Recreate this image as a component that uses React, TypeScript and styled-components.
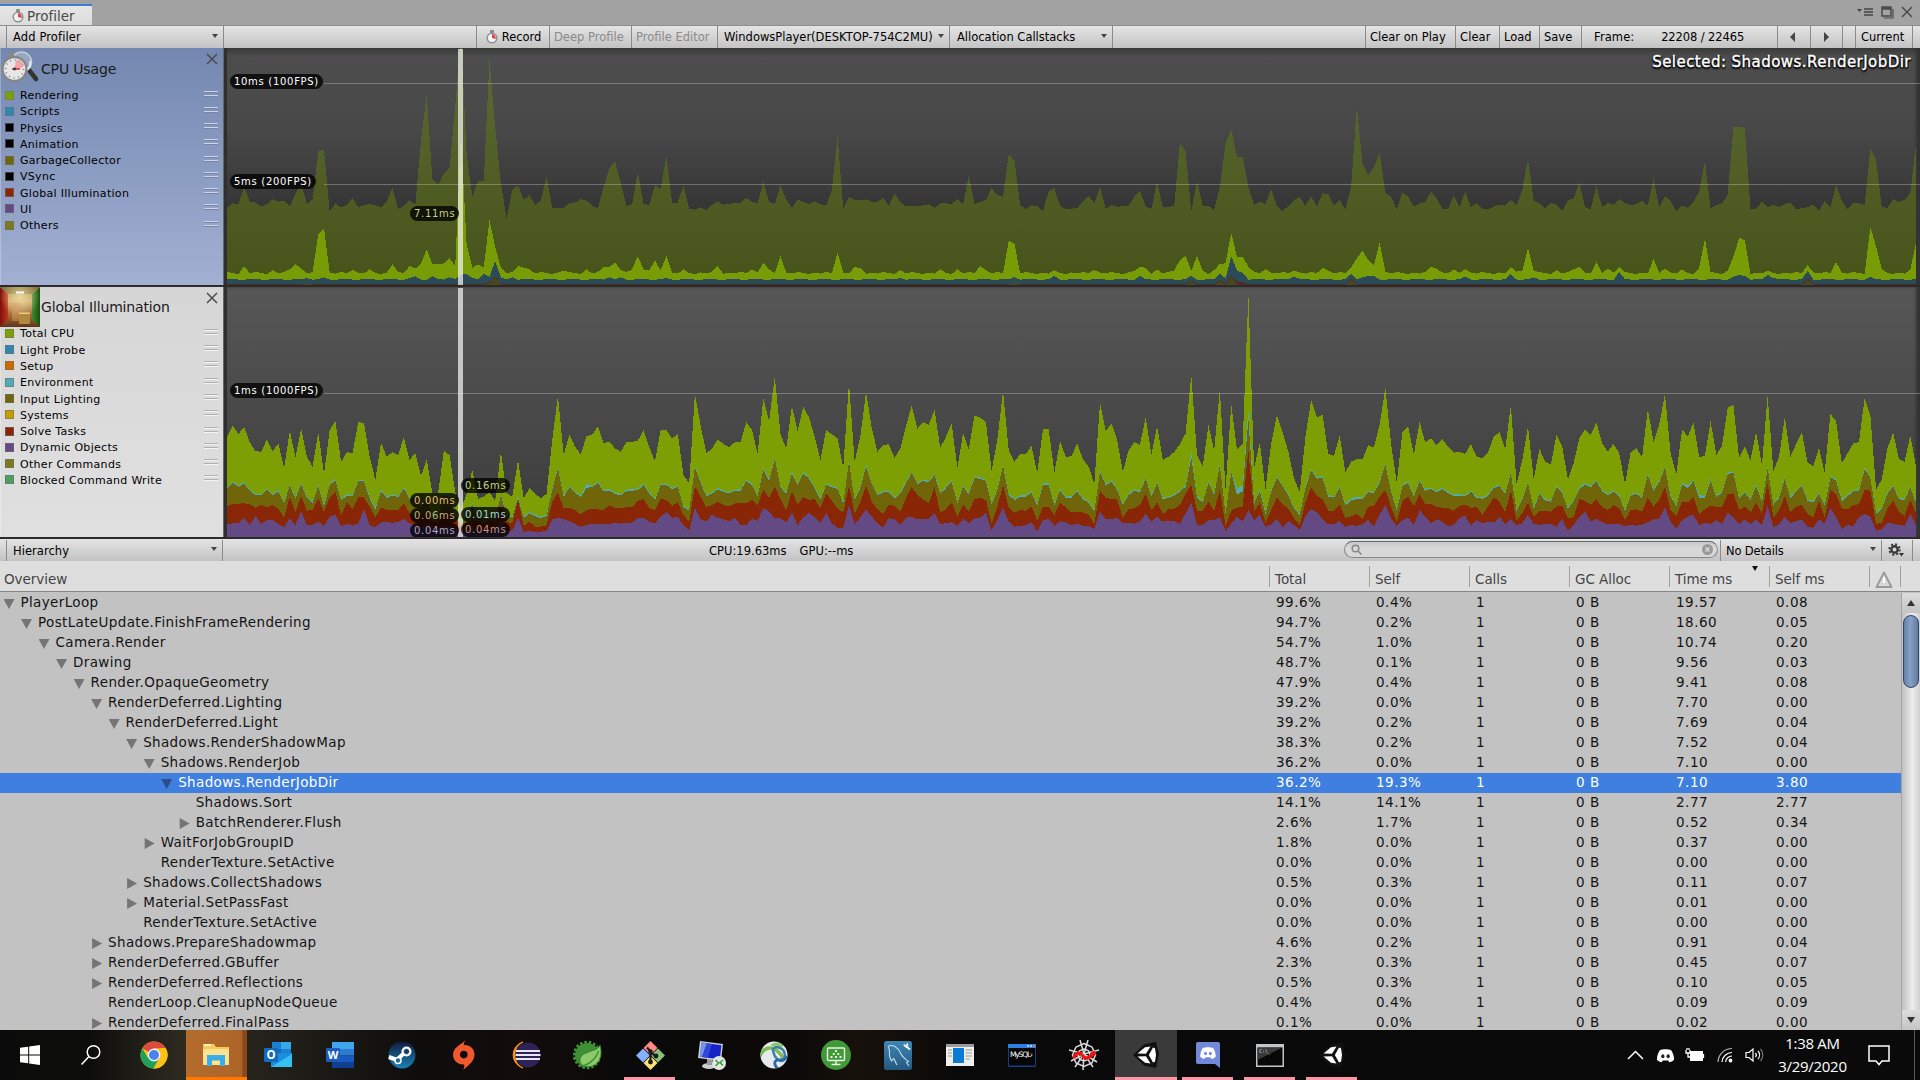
import React from "react";
import styled, { createGlobalStyle, css } from "styled-components";

const UI = `"DejaVu Sans", Verdana, sans-serif`;

const Global = createGlobalStyle`
  * { box-sizing: border-box; }
  html, body { margin: 0; padding: 0; overflow: hidden; background: #000; }
  body { font-family: ${UI}; color: #111; }
  svg { display: block; flex: none; }
`;

/* ---------- chart data (one value per frame, screen-down units) ---------- */

const parse = (s: string) => s.trim().split(/[\s,]+/).map(Number);

const cpuHistory = parse(`
623 610 612 562 605 608 620 612 598 605 602 620 580 550 612 598 453 450 635 610 622 615 594 622 615 612 616 622 605 563
627 618 600 615 420 285 538 553 520 505 320 100 465 590 543 543 180 380 550 655 570 556 600 585 615 602 530 623 623 623
610 607 598 602 617 625 560 505 483 550 618 612 516 612 615 555 568 467 608 608 557 627 629 622 630 615 604 614 612 609
608 594 605 610 545 605 612 555 598 624 599 605 612 604 612 617 570 408 625 590 600 600 598 605 605 594 618 580 606 618
617 620 616 613 624 610 610 612 597 614 528 612 606 600 564 585 590 462 483 615 627 616 618 633 575 564 618 627 626 624
605 587 610 560 627 615 620 619 618 590 571 620 627 545 622 621 618 428 455 633 543 617 618 630 560 430 386 470 472 560
615 605 612 566 618 633 618 600 591 618 588 620 580 582 618 600 628 560 322 490 525 502 458 580 590 628 578 590 620 610
606 575 595 627 627 585 622 575 622 609 627 629 620 614 617 600 615 570 477 602 610 624 609 614 633 602 594 548 622 628
558 623 608 614 597 609 615 612 602 617 537 622 588 604 633 617 623 605 575 483 625 615 610 585 382 381 383 627 626 605
621 615 621 612 608 628 624 622 613 633 602 622 555 602 627 610 610 615 447 480 620 624 597 606 600 580 430
`);

const renderingPeaks: Record<number, number> = {
  3: 798, 8: 810, 11: 808, 12: 793, 13: 805, 16: 702, 17: 686, 22: 810, 25: 808, 29: 793, 32: 798, 33: 806, 34: 790, 35: 747, 36: 793,
  37: 793, 38: 790, 39: 775, 40: 798, 41: 400, 42: 735, 43: 803, 44: 793, 45: 802, 46: 660, 47: 740, 48: 803, 51: 798,
  52: 803, 53: 808, 59: 812, 63: 808, 66: 802, 67: 802, 68: 787, 69: 810, 71: 808, 72: 768, 73: 808, 74: 812, 75: 780, 76: 812,
  77: 768, 80: 808, 86: 798, 92: 808, 94: 789, 95: 808, 97: 768, 107: 758, 110: 801, 111: 805, 118: 810, 125: 808, 128: 808,
  132: 798, 133: 810, 137: 723, 138: 730, 145: 810, 152: 810, 159: 812, 160: 801, 161: 803, 163: 808, 166: 812, 167: 780,
  168: 768, 169: 812, 170: 768, 171: 812, 173: 810, 174: 792, 175: 790, 176: 698, 177: 770, 178: 770, 179: 800, 182: 808,
  187: 812, 192: 804, 193: 812, 197: 803, 198: 775, 199: 752, 200: 780, 201: 795, 202: 727, 203: 815, 211: 801, 212: 806,
  215: 808, 217: 808, 225: 801, 226: 815, 227: 812, 228: 745, 229: 812, 233: 811, 236: 808, 237: 801, 240: 787, 242: 806,
  244: 801, 250: 776, 252: 806, 255: 808, 258: 805, 259: 716, 263: 812, 264: 770, 265: 714, 266: 720, 270: 812, 277: 795,
  282: 786, 288: 681, 289: 740, 290: 808, 295: 810, 296: 728,
};
const scriptPeaks: Record<number, number> = {
  14: 834, 17: 832, 32: 834, 33: 829, 36: 829, 39: 832, 41: 824, 42: 822, 43: 834, 45: 822, 46: 830, 47: 784, 48: 832, 50: 832, 67: 832, 69: 832, 77: 834, 118: 834,
  138: 831, 145: 828, 160: 828, 169: 828, 174: 820, 175: 835, 176: 768, 177: 812, 178: 818, 187: 830, 197: 822, 199: 832, 200: 828,
  201: 828, 217: 830, 225: 822, 229: 832, 244: 816, 264: 830, 265: 825, 266: 828, 270: 825, 271: 834, 277: 813, 288: 830,
};
const giPeaks: Record<number, number> = { 46: 845, 47: 828, 169: 842, 174: 840, 176: 826, 177: 845, 178: 846, 197: 834, 277: 836 };

const FRAMES = 297;
const fill = (peaks: Record<number, number>, base: (i: number) => number) =>
  Array.from({ length: FRAMES }, (_, i) => peaks[i] ?? base(i));

const cpuRendering = fill(renderingPeaks, (i) => 819 + (((i * 7) % 5) - 2) * 1.6);
const cpuScripts = fill(scriptPeaks, (i) => 837 + ((i * 5) % 4) * 0.8);
const cpuGI = fill(giPeaks, () => 851.5);
const cpuGC = fill({ 14: 849, 46: 849, 47: 831, 138: 847, 169: 844, 174: 843, 176: 830, 197: 837, 277: 839 }, () => 855);

const giTotal = parse(`
472 436 462 441 487 514 515 478 514 490 564 453 532 446 530 560 456 582 450 423 546 516 520 426 429 530 600 488 530 516
525 471 540 519 588 537 640 640 513 525 636 690 640 570 656 650 636 662 514 640 650 540 655 625 642 654 642 480 348 525
465 500 524 468 464 438 490 484 506 515 487 486 482 450 502 543 450 450 476 462 585 610 342 435 520 505 478 492 502 487
486 426 450 520 354 424 290 462 505 378 453 380 412 470 540 450 463 475 564 306 545 468 336 445 515 495 493 534 505 438
376 446 426 434 390 504 470 430 564 459 508 407 413 426 572 480 333 512 545 522 522 498 578 448 448 578 483 531 528 490
538 560 612 368 453 430 480 575 512 486 495 411 523 438 540 530 516 492 460 285 525 560 435 512 327 628 372 508 490 42
565 487 628 490 405 457 515 595 636 470 360 412 405 522 528 467 577 545 538 538 495 503 435 323 490 608 457 438 523 426
487 475 496 477 500 518 516 522 492 530 535 517 470 456 508 375 612 540 438 598 507 545 553 466 500 598 550 475 448 465
427 490 515 492 520 612 517 505 531 387 485 435 342 520 583 448 470 427 531 528 423 525 498 383 375 535 498 540 456 556
345 573 530 411 530 492 456 548 558 504 578 402 423 550 520 490 486 354 405 628 598 505 458 537 545 466 560
`);

const giSolve = parse(`
680 671 671 670 673 683 674 682 675 687 713 650 695 647 692 690 655 695 652 636 705 668 686 652 652 680 712 682 690 691
690 670 700 710 705 690 725 725 690 695 720 738 735 720 725 730 720 728 680 725 730 660 738 725 740 740 736 665 638 685
684 690 704 690 687 688 690 675 685 685 682 682 663 657 685 690 657 660 678 667 705 725 620 650 682 675 665 675 680 670
668 670 660 675 628 655 618 658 690 636 672 652 660 657 685 640 662 685 698 618 700 668 617 665 688 702 673 678 695 655
621 645 658 670 622 697 688 667 710 673 695 657 654 660 730 680 615 683 698 690 692 680 722 680 680 705 667 683 697 697
697 704 732 632 654 657 658 714 688 685 675 641 692 667 702 688 686 675 640 616 692 692 665 693 630 738 692 683 680 513
695 668 728 690 652 673 685 715 735 668 621 647 658 692 693 673 714 708 702 717 680 678 650 630 680 725 663 650 678 643
672 672 680 683 685 692 678 673 684 680 705 680 652 665 697 633 720 700 668 710 693 693 695 680 677 714 712 657 663 675
658 682 690 675 685 720 690 688 695 653 680 660 620 690 708 665 667 650 702 688 677 680 682 642 640 690 680 697 667 700
610 712 692 648 697 680 675 702 712 662 712 630 642 685 688 675 673 630 632 732 728 685 662 695 708 658 700
`);

const giDynamic = parse(`
733 730 730 714 735 708 732 720 720 732 742 715 735 693 735 735 725 738 710 703 740 730 737 730 687 735 742 727 726 729
725 717 730 735 740 740 750 745 740 740 745 755 755 740 750 750 750 750 720 750 752 713 756 752 756 755 752 718 714 717
724 732 740 735 731 731 732 733 728 731 728 728 713 713 725 730 710 697 714 710 735 752 683 717 725 703 714 717 725 714
735 735 715 723 684 693 716 714 728 697 735 712 699 712 730 698 730 743 744 675 732 712 689 710 730 743 714 718 735 713
711 718 717 717 698 732 730 726 738 716 730 716 713 698 750 720 682 725 740 738 735 726 755 720 717 737 724 727 735 731
737 738 747 695 717 717 714 730 729 731 724 701 725 711 725 723 723 732 700 668 735 735 720 720 712 753 730 710 724 690
720 705 740 733 717 743 722 735 750 708 687 697 717 733 733 722 740 735 738 732 720 740 705 675 715 738 720 713 735 691
710 730 718 725 738 735 714 707 738 720 730 725 727 710 732 717 735 730 704 732 735 731 731 740 716 753 735 710 695 725
716 727 733 731 731 740 734 737 734 727 718 717 682 725 746 720 710 704 736 728 732 720 732 698 712 732 718 732 718 735
678 742 733 710 730 723 719 740 743 718 730 683 712 747 735 738 712 702 710 752 748 728 731 735 737 702 735
`);

const GI_BASE = 771;
const giInput = giTotal.map((v, i) => Math.min(GI_BASE - (GI_BASE - v) * 0.487, giSolve[i] - 6));
const giEnvExtra: Record<number, number> = { 63: 12, 169: 16, 177: 16, 178: 20, 179: 28, 198: 8, 256: 8, 258: 10 };
const giEnv = giInput.map((v, i) => v - (giEnvExtra[i] ?? 4));

const area = (values: number[], base: number) =>
  `M0 ${base}` + values.map((v, i) => `L${i} ${v.toFixed(1)}`).join("") + `L${values.length - 1} ${base}Z`;

/* ---------- window frame ---------- */

const Screen = styled.div`
  width: 1920px; height: 1080px; display: flex; flex-direction: column; overflow: hidden; background: #c2c2c2;
`;
const TitleBar = styled.div`
  height: 26px; flex: none; background: #a2a2a2; display: flex; justify-content: space-between; align-items: flex-end;
  border-bottom: 1px solid #8f8f8f;
`;
const Tab = styled.div`
  width: 92px; height: 21px; border-top: 2px solid #3d7dd0; background: linear-gradient(#e6e6e6, #dcdcdc);
  display: flex; align-items: center; padding-left: 12px; gap: 3px; font-size: 13.5px; letter-spacing: 0.02px; color: #4a4a4a;
`;
const WindowButtons = styled.div`
  display: flex; align-items: center; gap: 7px; height: 26px; padding-right: 7px;
`;

const Bar = styled.div<{ $h: number; $drop?: number }>`
  height: ${(p) => p.$h}px; flex: none; display: flex; background: linear-gradient(#e4e4e4, #c3c3c3);
  font-size: 11.5px; color: #000; padding-top: ${(p) => p.$drop ?? 0}px;
`;
const Cell = styled.div<{ $w?: number; $pad?: number; $muted?: boolean; $ls?: number; $line?: boolean; $center?: boolean }>`
  ${(p) => (p.$w ? css`width: ${p.$w}px; flex: none;` : css`flex: 1;`)}
  height: 100%; display: flex; align-items: center; padding: 0 0 0 ${(p) => p.$pad ?? 0}px;
  border-right: ${(p) => (p.$line === false ? "0" : "1px solid #8b8b8b")};
  color: ${(p) => (p.$muted ? "#8a8a8a" : "#000")};
  letter-spacing: ${(p) => p.$ls ?? 0}px; white-space: pre;
  ${(p) => p.$center && css`justify-content: center; padding: 0;`}
`;
const Grow = styled.span`flex: 1;`;
const Caret = styled.i`
  width: 0; height: 0; border: 3px solid transparent; border-top: 4px solid #444; border-bottom: 0; margin: -3px 5px 0 0;
`;
const Step = styled.i<{ $left?: boolean }>`
  width: 0; height: 0; border: 5px solid transparent; border-right-width: 0; border-left: 5px solid #444;
  margin-right: ${(p) => (p.$left ? 4 : 1)}px;
  transform: ${(p) => (p.$left ? "scaleX(-1)" : "none")};
`;
const FrameCount = styled.span`letter-spacing: -0.1px; padding-right: 6px;`;
const GpuTime = styled.span`margin-left: 13px;`;

/* ---------- module panels ---------- */

const Module = styled.div<{ $h: number }>`
  height: ${(p) => p.$h}px; flex: none; display: flex; border-bottom: 2px solid #2b2b2b; background: #333;
`;
const Side = styled.div<{ $selected?: boolean }>`
  width: 224px; flex: none; border-right: 1px solid #666;
  background: ${(p) => (p.$selected ? "linear-gradient(#7387b0, #a2b0d2)" : "linear-gradient(#d6d6d6, #e0e0e0)")};
  box-shadow: inset 1px 0 rgba(255,255,255,.25);
`;
const SideHead = styled.div`
  height: 40px; display: flex; align-items: center; font-size: 14px; letter-spacing: -0.16px; color: #1b1b1b;
`;
const SideTitle = styled.span<{ $drop?: boolean }>`padding: ${(p) => (p.$drop ? 2 : 0)}px 0 0 1px; flex: 1;`;
const CloseMark = styled.svg`align-self: flex-start; margin: 5px 5px 0 0;`;
const Legend = styled.div<{ $top: number }>`
  margin-top: ${(p) => p.$top}px; display: flex; flex-direction: column;
`;
const LegendRow = styled.div`
  height: 16.27px; display: flex; align-items: center; font-size: 11px; letter-spacing: 0.3px; padding: 0 5px; color: #000;
`;
const Swatch = styled.i<{ $c: string }>`
  width: 9px; height: 9px; background: ${(p) => p.$c}; border: 1px solid rgba(110,110,110,.6); margin-right: 6px; margin-top: -1px;
`;
const Handle = styled.i<{ $selected?: boolean }>`
  width: 14px; height: 7px; margin: -3px 0 0 auto;
  background: ${(p) =>
    p.$selected
      ? "linear-gradient(#ccd4e6 0 1px, #7685a6 1px 2px, transparent 2px 4px, #ccd4e6 4px 5px, #7685a6 5px 6px, transparent 6px)"
      : "linear-gradient(#b0b0b0 0 1px, #f4f4f4 1px 2px, transparent 2px 4px, #b0b0b0 4px 5px, #f4f4f4 5px 6px, transparent 6px)"};
`;
const Plot = styled.div<{ $gi?: boolean }>`
  flex: 1; position: relative; padding: 0 4px 0 3px; overflow: hidden;
  background: ${(p) => (p.$gi ? "linear-gradient(#575757, #3b3b3b)" : "linear-gradient(#3a3d3a, #4d4d4d 4%, #484848 35%, #343434 70%, #2e2e2e)")};
  box-shadow: inset 3px 0 #2f2f2f, inset -4px 0 3px #333;
`;
const GridLine = styled.i<{ $y: number; $x: number }>`
  position: absolute; left: ${(p) => p.$x}px; right: 0; top: ${(p) => p.$y}px; height: 1px; background: rgba(255,255,255,.27);
`;
const Cursor = styled.i`
  position: absolute; left: 234px; width: 5px; top: 1px; bottom: 0; background: rgba(240,240,236,.74);
`;
const Pill = styled.span<{ $x: number; $y: number; $w: number; $c?: string }>`
  position: absolute; left: ${(p) => p.$x}px; top: ${(p) => p.$y}px; width: ${(p) => p.$w}px; height: 15px; border-radius: 8px;
  background: rgba(0,0,0,.78); color: ${(p) => p.$c ?? "#fff"}; font-size: 10px; line-height: 15px; letter-spacing: 0.7px;
  padding-left: 4px; white-space: nowrap;
`;
const Selected = styled.div`
  position: absolute; right: 9px; top: 5px; font-size: 15px; line-height: 18px; color: #fff; letter-spacing: 0.46px;
  text-shadow: 0 1px 1px #000, 0 2px 2px #000, 1px 1px 1px #000, -1px 1px 1px #000;
  -webkit-text-stroke: 0.4px #fff;
`;

/* ---------- hierarchy table ---------- */

const Search = styled.div`
  width: 374px; height: 17px; margin: 1px 2px 0 0; border: 1px solid #888; border-top-color: #666; border-radius: 9px;
  background: linear-gradient(#c9c9c9, #d8d8d8 40%); display: flex; align-items: center; justify-content: space-between; padding: 0 4px 0 6px;
`;
const HeaderRow = styled.div`
  height: 31px; flex: none; display: flex; background: #dedede; border-bottom: 1px solid #858585; color: #444;
  font-size: 13.5px; letter-spacing: -0.05px; padding-top: 5px;
`;
const HeadCell = styled.div<{ $w?: number }>`
  ${(p) => (p.$w ? css`width: ${p.$w}px;` : css`width: 1269px; border: 0;`)}
  flex: none; height: 21px; line-height: 27px; padding-left: ${(p) => (p.$w ? 5 : 4)}px; position: relative; white-space: nowrap;
  ${(p) => p.$w && css`border-left: 1px solid #a0a0a0;`}
`;
const SortMark = styled.i`
  position: absolute; right: 11px; top: 0; border: 3px solid transparent; border-top: 5px solid #111; border-bottom: 0;
`;
const Warning = styled.svg`margin-top: 5px;`;
const TableBody = styled.div`flex: 1; min-height: 0; display: flex; overflow: hidden; padding-top: 1px;`;
const Rows = styled.div`width: 1901px; flex: none;`;
const Row = styled.div<{ $on?: boolean }>`
  height: 20px; display: flex; font-size: 13.5px; line-height: 18px; white-space: nowrap;
  background: ${(p) => (p.$on ? "#3e7fdf" : "transparent")}; color: ${(p) => (p.$on ? "#fff" : "#141414")};
`;
const NameCell = styled.div<{ $depth: number }>`
  width: 1270px; flex: none; display: flex; align-items: flex-start; letter-spacing: 0.36px;
  padding-left: ${(p) => 3.5 + p.$depth * 17.52}px;
`;
const Arrow = styled.i<{ $open?: boolean; $none?: boolean; $on?: boolean }>`
  width: 12px; height: 12px; margin: 5px 5px 0 0; flex: none;
  background: ${(p) => (p.$none ? "transparent" : p.$on ? "#2c4f8c" : "#757575")};
  clip-path: ${(p) => (p.$open ? "polygon(0 1px, 11px 1px, 5.5px 11px)" : "polygon(1px 0, 11px 5.5px, 1px 11px)")};
`;
const Value = styled.div`width: 100px; flex: none; padding-left: 6px; letter-spacing: 0.5px;`;
const Scroll = styled.div`
  width: 19px; flex: none; border-left: 1px solid #a5a5a5; display: flex; flex-direction: column; align-items: center;
  background: linear-gradient(90deg, #c0c0c0, #eee 60%, #cfcfcf);
`;
const ScrollButton = styled.div<{ $down?: boolean }>`
  width: 100%; height: 20px; flex: none; display: flex; align-items: center; justify-content: center; background: linear-gradient(#dcdcdc, #c4c4c4);
  &::after { content: ""; border: 4px solid transparent; border-bottom: 6px solid #333; border-top: 0; transform: ${(p) => (p.$down ? "rotate(180deg)" : "none")}; }
`;
const Thumb = styled.div`
  width: 16px; height: 73px; margin-top: 2px; border-radius: 8px; border: 1.5px solid #33466b; background: linear-gradient(90deg, #6580a8, #88a0c4 45%, #5f7ba5);
`;

/* ---------- taskbar ---------- */

const TaskBar = styled.div`
  height: 50px; flex: none; display: flex; color: #fff; font-family: "Open Sans", "Noto Sans", sans-serif;
  background: linear-gradient(90deg, #0b0b0b 0, #0d0d0b 90px, #2d2a20 180px, #24221b 260px, #0e0d0c 420px, #120c0b 520px, #090909 640px, #0c0a08 800px, #17110b 860px, #0a0909 960px, #0a0a0a);
`;
const Task = styled.div<{ $w?: number; $active?: boolean; $orange?: boolean; $line?: boolean }>`
  width: ${(p) => p.$w ?? 62}px; flex: none; display: flex; align-items: center; justify-content: center; position: relative;
  ${(p) => p.$active && css`background: #3a3a3a;`}
  ${(p) => p.$orange && css`background: linear-gradient(90deg, #b46c2d, #ac6428 92%, #874a18 93%); padding-right: 2px;`}
  &::after {
    content: ""; position: absolute; bottom: 0; height: 3px;
    left: ${(p) => (p.$active || p.$orange ? 0 : 5)}px; right: ${(p) => (p.$active || p.$orange ? 0 : 6)}px;
    background: ${(p) => (p.$orange ? "#ff7800" : p.$line || p.$active ? "#fb96a4" : "transparent")};
  }
`;
const Tray = styled.div`margin-left: auto; display: flex; align-items: center;`;
const TrayItem = styled.div<{ $w: number }>`width: ${(p) => p.$w}px; display: flex; justify-content: center;`;
const Clock = styled.div`
  width: 85px; text-align: center; font-size: 15px; line-height: 23px; letter-spacing: -0.3px;
`;
const Notice = styled.div`width: 48px; display: flex; justify-content: center; margin-right: 11px;`;
const Peek = styled.div`width: 6px; height: 50px; border-left: 1px solid #555;`;

/* ---------- icons ---------- */

const Stopwatch = () => (
  <svg width="12" height="14" viewBox="0 0 12 14">
    <rect x="4" y="0" width="4" height="3" rx="1" fill="#8a8a8a" />
    <circle cx="6" cy="8" r="4.800" fill="#f2f2f2" stroke="#909090" strokeWidth="1.5" />
    <path d="M6 8V4A4 4 0 0 1 9.6 9Z" fill="#e0414d" />
  </svg>
);

const CpuIcon = () => (
  <svg width="40" height="34" viewBox="0 0 40 34">
    <path d="M29 19L36 28" stroke="#333" strokeWidth="4.5" strokeLinecap="round" />
    <circle cx="21.5" cy="11" r="10" fill="#b8c4dc" fillOpacity=".5" stroke="#c5ccd8" strokeWidth="1.5" />
    <rect x="9" y="1" width="5" height="6" fill="#888" />
    <circle cx="14.5" cy="18" r="12" fill="#e6e6e6" stroke="#868686" strokeWidth="2.4" />
    <circle cx="14.5" cy="18" r="9" fill="none" stroke="#777" strokeWidth="1.6" strokeDasharray="1 3.7" />
    <path d="M14.5 18L16 9A9 9 0 0 1 24 14L22 17Z" fill="#ee9a9c" opacity=".85" />
    <path d="M30 10A8 8 0 0 1 27.500 18" stroke="#dfe4ee" strokeWidth="2" fill="none" />
    <path d="M12 18H20" stroke="#c22" strokeWidth="1.4" />
    <circle cx="14.5" cy="18" r="1.4" fill="#333" />
  </svg>
);

const CornellIcon = () => (
  <svg width="40" height="40" viewBox="0 0 40 40">
    <defs>
      <linearGradient id="room" x1="0" y1="0" x2="0" y2="1">
        <stop offset="0" stopColor="#9a8448" /><stop offset=".35" stopColor="#c9a765" /><stop offset=".75" stopColor="#9a6230" /><stop offset="1" stopColor="#5f3417" />
      </linearGradient>
      <radialGradient id="glow" cx=".5" cy=".25" r=".5"><stop offset="0" stopColor="#fff0b8" stopOpacity=".7" /><stop offset="1" stopColor="#fff0b8" stopOpacity="0" /></radialGradient>
      <linearGradient id="redWall"><stop offset="0" stopColor="#7a120a" /><stop offset="1" stopColor="#c0341c" /></linearGradient>
      <linearGradient id="greenWall"><stop offset="0" stopColor="#3d8a2b" /><stop offset="1" stopColor="#1b4f14" /></linearGradient>
    </defs>
    <rect width="40" height="40" fill="url(#room)" />
    <path d="M0 0L8 7V33L0 39Z" fill="url(#redWall)" />
    <path d="M40 0L32 7V33L40 39Z" fill="url(#greenWall)" />
    <path d="M0 0H40L32 7H8Z" fill="#85723a" />
    <rect width="40" height="40" fill="url(#glow)" />
    <rect x="16" y="4.5" width="8" height="2" fill="#fff" />
    <path d="M12 16H20V34H12Z" fill="#d9a267" opacity=".45" />
    <path d="M19 26H30V37H19Z" fill="#ae8a40" /><path d="M19 25.5H30V27H19Z" fill="#ead07c" />
  </svg>
);

const Close = () => (
  <CloseMark width="12" height="12" viewBox="0 0 12 12"><path d="M1 1L11 11M11 1L1 11" stroke="#4c4c4c" strokeWidth="1.5" /></CloseMark>
);

const WindowsLogo = () => (
  <svg width="20" height="20" viewBox="0 0 20 20" fill="#fff">
    <path d="M0 2.8L8.2 1.7V9.5H0ZM9.2 1.5L20 0V9.5H9.2ZM0 10.5H8.2V18.3L0 17.2ZM9.2 10.5H20V20L9.2 18.5Z" />
  </svg>
);
const Magnifier = () => (
  <svg width="22" height="22" viewBox="0 0 22 22" fill="none" stroke="#fff" strokeWidth="1.5"><circle cx="13.5" cy="8" r="6.3" /><path d="M9 12.5L1.5 20.5" /></svg>
);
const Chrome = () => (
  <svg width="28" height="28" viewBox="0 0 28 28">
    <circle cx="14" cy="14" r="13.5" fill="#fbc116" />
    <path d="M14 14L2.3 7.2A13.5 13.5 0 0 1 25.7 7.2H14Z" fill="#dd4b3e" />
    <path d="M2.3 7.2A13.5 13.5 0 0 0 13.5 27.5L19.5 17L14 14L8 17Z" fill="#1da05a" />
    <path d="M25.7 7.2A13.5 13.5 0 0 1 13.5 27.5L19.5 17L20 10V7.2Z" fill="#fbc116" />
    <circle cx="14" cy="14" r="6.4" fill="#f4f4f4" /><circle cx="14" cy="14" r="5" fill="#4a82ee" />
  </svg>
);
const Explorer = () => (
  <svg width="28" height="24" viewBox="0 0 28 24">
    <path d="M1 1H12L14 4H27V22H1Z" fill="#f5ca55" /><path d="M1 6H27V22H1Z" fill="#fde391" />
    <path d="M2.5 2H9" stroke="#fff" strokeWidth="1.5" />
    <path d="M5 12H23V23H18V17.5H10V23H5Z" fill="#3aaee6" />
  </svg>
);
const Outlook = () => (
  <svg width="30" height="28" viewBox="0 0 30 28">
    <path d="M9 1H28V14H9Z" fill="#1d7fd0" /><path d="M18 1H28V8H18Z" fill="#33a9ea" /><path d="M9 8H18V15H9Z" fill="#1368b8" />
    <path d="M8 12L29 12V26H8Z" fill="#1c8de0" /><path d="M29 13L8 26H29Z" fill="#35c0f1" />
    <rect x="1" y="7" width="14" height="14" rx="1" fill="#0f6cbd" />
    <text x="8" y="18.3" fontSize="11.5" fontWeight="700" textAnchor="middle" fill="#fff">O</text>
  </svg>
);
const Word = () => (
  <svg width="30" height="28" viewBox="0 0 30 28">
    <path d="M7 1H29V8H7Z" fill="#41a5ee" /><path d="M7 8H29V14.5H7Z" fill="#2b7cd3" /><path d="M7 14.5H29V21H7Z" fill="#185abd" /><path d="M7 21H29V27H7Z" fill="#103f91" />
    <rect x="1" y="7" width="14" height="14" rx="1" fill="#1b5cbe" />
    <text x="8" y="18" fontSize="11" fontWeight="700" textAnchor="middle" fill="#fff">W</text>
  </svg>
);
const Steam = () => (
  <svg width="28" height="28" viewBox="0 0 28 28">
    <defs><linearGradient id="steam" x1="0" y1="0" x2="0" y2="1"><stop offset="0" stopColor="#111d3c" /><stop offset="1" stopColor="#1a83b8" /></linearGradient></defs>
    <circle cx="14" cy="14" r="13.5" fill="url(#steam)" />
    <path d="M.8 16L9 19L14 14L18 11" stroke="#fff" strokeWidth="4" fill="none" />
    <circle cx="18.5" cy="10.5" r="5" fill="#fff" /><circle cx="18.5" cy="10.5" r="3.1" fill="#1b3a63" stroke="#fff" strokeWidth=".8" />
    <circle cx="10" cy="19.5" r="3.8" fill="#fff" /><circle cx="10" cy="19.5" r="2.2" fill="#216a9a" />
  </svg>
);
const Origin = () => (
  <svg width="24" height="30" viewBox="0 0 24 30">
    <path d="M14 0C12 2 11.5 3.5 12 5C18 4.5 22.5 9 22.5 14.5C22.5 21 17 25 11 30C12.5 27.5 12.5 26 12 24.5C6 25 1 20.5 1 14.5C1 8 8 5 14 0Z" fill="#f0592b" />
    <circle cx="11.8" cy="14.6" r="3.8" fill="#0c0c0c" />
  </svg>
);
const Eclipse = () => (
  <svg width="30" height="28" viewBox="0 0 30 28">
    <path d="M12 1A13.5 13.5 0 0 0 12 27A14.5 14.5 0 0 1 12 1Z" fill="#f7941e" stroke="#f7941e" />
    <circle cx="17" cy="14" r="12.6" fill="#2c2255" />
    <path d="M5 10H29M4.5 14H29.5M5 18H29" stroke="#e8e6f2" strokeWidth="2" />
  </svg>
);
const Spring = () => (
  <svg width="30" height="30" viewBox="0 0 30 30">
    <circle cx="14" cy="15" r="12" fill="#3f8f34" /><circle cx="14" cy="15" r="12.5" fill="none" stroke="#3f8f34" strokeWidth="3.5" strokeDasharray="2.5 1.8" />
    <path d="M27 5C25 10 20 10 13 13C7 15 5 21 9 25C18 30 32 23 27 5Z" fill="#8ccb69" stroke="#2f7a26" strokeWidth=".8" />
    <path d="M8 26C16 25 23 19 25.5 11" stroke="#3f8f34" strokeWidth="1.4" fill="none" />
  </svg>
);
const Git = () => (
  <svg width="31" height="31" viewBox="0 0 31 31">
    <path d="M15.5 1L22.5 8L15.5 15L8.5 8Z" fill="#ff8a85" /><path d="M8 8.5L15 15.5L8 22.5L1 15.5Z" fill="#84b0ff" />
    <path d="M23 8.5L30 15.5L23 22.5L16 15.5Z" fill="#8ac07a" /><path d="M15.5 16L22.5 23L15.5 30L8.5 23Z" fill="#ffe17a" />
    <path d="M12 7.5L15.5 11.5V23M16 12.5L21 16.5" stroke="#1b1b1b" strokeWidth="2.2" fill="none" />
    <circle cx="15.5" cy="11.5" r="2.2" fill="#1b1b1b" /><circle cx="21" cy="16" r="2.4" fill="#1b1b1b" /><circle cx="15.5" cy="22" r="2.4" fill="#1b1b1b" />
  </svg>
);
const Remote = () => (
  <svg width="30" height="31" viewBox="0 0 30 31">
    <ellipse cx="12" cy="26" rx="7" ry="3" fill="#cfcfcf" /><path d="M10 19H15V25H10Z" fill="#999" />
    <path d="M3 1L26 4L24 21L1 18Z" fill="#c9cdd6" /><path d="M4.5 2.6L24.4 5.3L22.8 19.3L2.8 16.8Z" fill="#1522c4" />
    <path d="M4.5 2.6L10 3.4L5 17L2.8 16.8Z" fill="#8fb0f6" opacity=".8" /><path d="M10 3.4L15 4L11 18L5 17Z" fill="#3148d8" />
    <circle cx="22" cy="23" r="7" fill="#e3e6e3" /><path d="M18.5 20L21.5 23L18.5 26M26 20L23 22.5L26 25.5" stroke="#31a23a" strokeWidth="1.6" fill="none" />
  </svg>
);
const Globe = () => (
  <svg width="28" height="28" viewBox="0 0 28 28">
    <defs><clipPath id="ball"><circle cx="14" cy="14" r="13.5" /></clipPath></defs>
    <g clipPath="url(#ball)">
      <rect width="28" height="28" fill="#e6eaec" />
      <path d="M0 15C2 9 8 5 14 8C18 10 21 13 23 17" stroke="#7dbb58" strokeWidth="3.6" fill="none" />
      <path d="M10 4C14 1 19 0 24 5L19 7Z" fill="#8cc56d" />
      <path d="M13 9C13 6 18 5 22 8C26 11 25 17 24 19C20 22 14 17 13 9Z" stroke="#3a7fa6" strokeWidth="2.4" fill="none" />
      <path d="M28 15C24 21 19 18 17 19C13 21 15 25 18 28" stroke="#2b67a8" strokeWidth="2.8" fill="none" />
    </g>
  </svg>
);
const GreenBoard = () => (
  <svg width="30" height="30" viewBox="0 0 30 30">
    <circle cx="15" cy="15" r="15" fill="#409a37" />
    <g fill="none" stroke="#e9f5e7" strokeWidth="1.4"><rect x="6.5" y="8" width="17" height="12.5" rx="1" /><path d="M15 20.5V24M10.5 24.5H19.5" /></g>
    <path d="M14 10H16V12H14ZM11.8 13H13.6V15H11.8ZM16.4 13H18.2V15H16.4ZM9.5 16H11.5V18H9.5ZM14 16H16V18H14ZM18.5 16H20.5V18H18.5Z" fill="#e9f5e7" />
  </svg>
);
const Dolphin = () => (
  <svg width="28" height="29" viewBox="0 0 28 29">
    <defs><linearGradient id="sea" x1="0" y1="0" x2="0" y2="1"><stop offset="0" stopColor="#3f86b4" /><stop offset="1" stopColor="#23597f" /></linearGradient></defs>
    <rect width="28" height="29" rx="2.5" fill="url(#sea)" />
    <path d="M4.5 5C9 3.5 14 6 16.5 12C18 16 21 18 24.5 20.5L22.5 21.5L25 25M4.5 5C3.5 6 6 8 5.5 11C5 14 6.5 18 7.5 20L9.5 17.5C11 19 11.5 22 13 24" fill="none" stroke="#c4dbe9" strokeWidth="1.1" />
    <path d="M20 3.5C21 6 22 5 26 8.5M23 2.5L23.5 5.5" stroke="#fff" strokeWidth="1.8" fill="none" />
  </svg>
);
const PanelApp = () => (
  <svg width="28" height="22" viewBox="0 0 28 22">
    <rect width="28" height="22" fill="#efefef" /><rect width="28" height="3" fill="#9b9b9b" />
    <rect x="7" y="4" width="11" height="15" fill="#0b7bd8" />
    <path d="M2 6H6M2 9H6M2 12H6M19.5 6H26M19.5 9H26M19.5 12H26M19.5 15H24" stroke="#9a9a9a" />
  </svg>
);
const MySql = () => (
  <svg width="28" height="23" viewBox="0 0 28 23">
    <rect width="28" height="23" rx="1" fill="#123f86" /><rect width="28" height="4" fill="#2c7fe0" /><rect x="1" y="4" width="26" height="17.5" fill="#050505" />
    <rect x="19" y="1" width="2" height="2" fill="#9fd0ff" /><rect x="22" y="1" width="2" height="2" fill="#9fd0ff" /><rect x="25" y="1" width="2" height="2" fill="#ff6a5a" />
    <text x="2" y="12.5" fontSize="7.5" fill="#fff" textLength="23" fontFamily="DejaVu Sans">MySQL›</text>
  </svg>
);
const Spider = () => (
  <svg width="30" height="30" viewBox="0 0 30 30">
    <g fill="none" stroke="#d9d9d9" strokeWidth="1.5">
      <path d="M15 3.5L23 7L26.5 15L23 23L15 26.5L7 23L3.5 15L7 7Z" /><path d="M15 9L19.5 10.8L21 15L19.5 19.5L15 21L10.5 19.5L9 15L10.5 10.8Z" />
      <path d="M11 0L15 14L14 30M0 10L15 14L30 10M2 21L15 14L28 22M19 0L15 14M6 27L15 14L24 27" />
    </g>
    <path d="M5 17C8 12 11 12 14 16S20 18 25 13" stroke="#f01010" strokeWidth="3.2" fill="none" strokeLinecap="round" /><circle cx="24.5" cy="13.5" r="2.4" fill="#f01010" />
  </svg>
);
const Unity = () => (
  <svg width="28" height="28" viewBox="0 0 28 28">
    <path d="M1 14L12 3.5L24 .8L27 13L24 27L12 24.5Z" fill="#111" />
    <path d="M5.5 12.5L13 6.2L18.5 5.5L14 12.8Z" fill="#fff" /><path d="M5.5 15.5L14 15.2L18.5 22.5L13 21.8Z" fill="#fff" /><path d="M21 6.5L23 7.2L24 14L23 20.8L21 21.5L16.8 14Z" fill="#fff" />
  </svg>
);
const DiscordFace = ({ fg, bg }: { fg: string; bg: string }) => (
  <>
    <path d="M5 3C8 1.6 14 1.6 17 3C19 6 20 9 20 13C18 15 16 15.5 15 15.5L13.8 13.8H8.2L7 15.5C6 15.5 4 15 2 13C2 9 3 6 5 3Z" fill={fg} />
    <ellipse cx="8.2" cy="9.3" rx="1.7" ry="2" fill={bg} /><ellipse cx="13.8" cy="9.3" rx="1.7" ry="2" fill={bg} />
  </>
);
const Discord = () => (
  <svg width="26" height="28" viewBox="0 0 26 28">
    <path d="M3 1H23A2 2 0 0 1 25 3V27L20 23H3A2 2 0 0 1 1 21V3A2 2 0 0 1 3 1Z" fill="#7289da" />
    <g transform="translate(3.5 4.5) scale(.86)"><DiscordFace fg="#fff" bg="#7289da" /></g>
  </svg>
);
const Terminal = () => (
  <svg width="28" height="23" viewBox="0 0 28 23">
    <rect width="28" height="23" fill="#c2c6cb" /><rect x="1.5" y="3.5" width="25" height="18" fill="#080808" />
    <path d="M1.5 3.5H26.5L1.5 16Z" fill="#3a3a3a" /><text x="3" y="9" fontSize="5" fill="#ddd" fontFamily="DejaVu Sans Mono">C:\_</text>
  </svg>
);

/* ---------- content ---------- */

const cpuLegend: [string, string][] = [
  ["Rendering", "#7da205"], ["Scripts", "#2f87ab"], ["Physics", "#000"], ["Animation", "#000"], ["GarbageCollector", "#706609"],
  ["VSync", "#000"], ["Global Illumination", "#882606"], ["UI", "#634a84"], ["Others", "#7a7a1e"],
];
const giLegend: [string, string][] = [
  ["Total CPU", "#7da205"], ["Light Probe", "#2f87ab"], ["Setup", "#cc6a00"], ["Environment", "#50abb9"], ["Input Lighting", "#706609"],
  ["Systems", "#c69e00"], ["Solve Tasks", "#882606"], ["Dynamic Objects", "#634a84"], ["Other Commands", "#7a7a1e"], ["Blocked Command Write", "#4c9f5e"],
];

type Kind = "open" | "closed" | "leaf";
const tree: [number, Kind, string, string][] = [
  [0, "open", "PlayerLoop", "99.6% 0.4% 19.57 0.08"],
  [1, "open", "PostLateUpdate.FinishFrameRendering", "94.7% 0.2% 18.60 0.05"],
  [2, "open", "Camera.Render", "54.7% 1.0% 10.74 0.20"],
  [3, "open", "Drawing", "48.7% 0.1% 9.56 0.03"],
  [4, "open", "Render.OpaqueGeometry", "47.9% 0.4% 9.41 0.08"],
  [5, "open", "RenderDeferred.Lighting", "39.2% 0.0% 7.70 0.00"],
  [6, "open", "RenderDeferred.Light", "39.2% 0.2% 7.69 0.04"],
  [7, "open", "Shadows.RenderShadowMap", "38.3% 0.2% 7.52 0.04"],
  [8, "open", "Shadows.RenderJob", "36.2% 0.0% 7.10 0.00"],
  [9, "open", "Shadows.RenderJobDir", "36.2% 19.3% 7.10 3.80"],
  [10, "leaf", "Shadows.Sort", "14.1% 14.1% 2.77 2.77"],
  [10, "closed", "BatchRenderer.Flush", "2.6% 1.7% 0.52 0.34"],
  [8, "closed", "WaitForJobGroupID", "1.8% 0.0% 0.37 0.00"],
  [8, "leaf", "RenderTexture.SetActive", "0.0% 0.0% 0.00 0.00"],
  [7, "closed", "Shadows.CollectShadows", "0.5% 0.3% 0.11 0.07"],
  [7, "closed", "Material.SetPassFast", "0.0% 0.0% 0.01 0.00"],
  [7, "leaf", "RenderTexture.SetActive", "0.0% 0.0% 0.00 0.00"],
  [5, "closed", "Shadows.PrepareShadowmap", "4.6% 0.2% 0.91 0.04"],
  [5, "closed", "RenderDeferred.GBuffer", "2.3% 0.3% 0.45 0.07"],
  [5, "closed", "RenderDeferred.Reflections", "0.5% 0.3% 0.10 0.05"],
  [5, "leaf", "RenderLoop.CleanupNodeQueue", "0.4% 0.4% 0.09 0.09"],
  [5, "closed", "RenderDeferred.FinalPass", "0.1% 0.0% 0.02 0.00"],
];

const LegendList = ({ items, top, selected }: { items: [string, string][]; top: number; selected?: boolean }) => (
  <Legend $top={top}>
    {items.map(([label, color]) => (
      <LegendRow key={label}><Swatch $c={color} />{label}<Handle $selected={selected} /></LegendRow>
    ))}
  </Legend>
);

export default function App() {
  return (
    <Screen>
      <Global />
      <TitleBar>
        <Tab><Stopwatch />Profiler</Tab>
        <WindowButtons>
          <svg width="17" height="12" viewBox="0 0 17 12"><path d="M0 3H5L2.5 6Z" fill="#444" /><path d="M7 3H16M7 6H16M7 9H16" stroke="#444" strokeWidth="1.3" /></svg>
          <svg width="13" height="13" viewBox="0 0 13 13" fill="none" stroke="#4a4a4a"><path d="M1 1H10V10H1Z" strokeWidth="1.5" /><path d="M1 2.5H10" strokeWidth="2.5" /><path d="M12 3V12H3" strokeWidth="1.2" /></svg>
          <svg width="12" height="12" viewBox="0 0 12 12"><path d="M1 1L11 11M11 1L1 11" stroke="#4a4a4a" strokeWidth="1.5" /></svg>
        </WindowButtons>
      </TitleBar>

      <Bar $h={22}>
        <Cell $w={7} />
        <Cell $w={217} $pad={6} $ls={0.12}>Add Profiler<Grow /><Caret /></Cell>
        <Cell $w={253} />
        <Cell $w={73} $pad={9}><Stopwatch /><span>&nbsp;Record</span></Cell>
        <Cell $w={82} $pad={4} $muted>Deep Profile</Cell>
        <Cell $w={86} $pad={4} $muted>Profile Editor</Cell>
        <Cell $w={232} $pad={6}>WindowsPlayer(DESKTOP-754C2MU)<Grow /><Caret /></Cell>
        <Cell $w={163} $pad={7}>Allocation Callstacks<Grow /><Caret /></Cell>
        <Cell />
        <Cell $w={90} $pad={4}>Clear on Play</Cell>
        <Cell $w={44} $pad={4} $ls={0.1}>Clear</Cell>
        <Cell $w={40} $pad={4}>Load</Cell>
        <Cell $w={42} $pad={4}>Save</Cell>
        <Cell $w={196} $pad={12} $ls={0.1}>Frame:<Grow /><FrameCount>22208 / 22465</FrameCount><Grow /></Cell>
        <Cell $w={33} $center><Step $left /></Cell>
        <Cell $w={32} $center><Step /></Cell>
        <Cell $w={13} />
        <Cell $w={57} $pad={5}>Current</Cell>
        <Cell $w={7} $line={false} />
      </Bar>

      <Module $h={239}>
        <Side $selected>
          <SideHead><CpuIcon /><SideTitle $drop>CPU Usage</SideTitle><Close /></SideHead>
          <LegendList items={cpuLegend} top={-0.6} selected />
        </Side>
        <Plot>
          <svg width="1689" height="237" viewBox="0 144 296 711" preserveAspectRatio="none" shapeRendering="crispEdges">
            <defs><linearGradient id="dim" gradientUnits="userSpaceOnUse" x1="0" y1="144" x2="0" y2="855"><stop offset="0" stopColor="#5b6a35" /><stop offset="1" stopColor="#465319" /></linearGradient></defs>
            <path d={area(cpuHistory, 855)} fill="url(#dim)" />
            <path d={area(cpuRendering, 855)} fill="#789c06" />
            <path d={area(cpuScripts, 855)} fill="#2c4b59" />
            <path d={area(cpuGI, 855)} fill="#4f2b20" />
            <path d={area(cpuGC, 855)} fill="#484722" />
          </svg>
          <GridLine $y={35} $x={100} />
          <GridLine $y={136} $x={100} />
          <Cursor />
          <Pill $x={6} $y={26} $w={93}>10ms (100FPS)</Pill>
          <Pill $x={6} $y={126} $w={86}>5ms (200FPS)</Pill>
          <Pill $x={186} $y={158} $w={49} $c="#c4d185">7.11ms</Pill>
          <Selected>Selected: Shadows.RenderJobDir</Selected>
        </Plot>
      </Module>

      <Module $h={252}>
        <Side>
          <SideHead><CornellIcon /><SideTitle>Global Illumination</SideTitle><Close /></SideHead>
          <LegendList items={giLegend} top={-1.2} />
        </Side>
        <Plot $gi>
          <svg width="1689" height="250" viewBox="0 21 296 750" preserveAspectRatio="none" shapeRendering="crispEdges">
            <path d={area(giTotal, GI_BASE)} fill="#7d9f04" />
            <path d={area(giEnv, GI_BASE)} fill="#50abb9" />
            <path d={area(giInput, GI_BASE)} fill="#706609" />
            <path d={area(giSolve, GI_BASE)} fill="#882606" />
            <path d={area(giDynamic, GI_BASE)} fill="#634a84" />
          </svg>
          <GridLine $y={106} $x={100} />
          <Cursor />
          <Pill $x={6} $y={96} $w={93}>1ms (1000FPS)</Pill>
          <Pill $x={186} $y={206} $w={49} $c="#e3b985">0.00ms</Pill>
          <Pill $x={186} $y={221} $w={49} $c="#b9b287">0.06ms</Pill>
          <Pill $x={186} $y={236} $w={49} $c="#b3a5c9">0.04ms</Pill>
          <Pill $x={237} $y={191} $w={49} $c="#c4d185">0.16ms</Pill>
          <Pill $x={237} $y={220} $w={49} $c="#a8d5da">0.01ms</Pill>
          <Pill $x={237} $y={235} $w={49} $c="#c99480">0.04ms</Pill>
        </Plot>
      </Module>

      <Bar $h={22} $drop={1}>
        <Cell $w={7} />
        <Cell $w={216} $pad={6} $ls={0.05}>Hierarchy<Grow /><Caret /></Cell>
        <Cell $line={false} $pad={486} $ls={0.02}>CPU:19.63ms<GpuTime>GPU:--ms</GpuTime></Cell>
        <Search>
          <svg width="11" height="11" viewBox="0 0 11 11" fill="none" stroke="#888" strokeWidth="1.5"><circle cx="4.5" cy="4.5" r="3.3" /><path d="M7 7L10.5 10.5" /></svg>
          <svg width="11" height="11" viewBox="0 0 11 11"><circle cx="5.5" cy="5.5" r="5.5" fill="#999" /><path d="M3.5 3.5L7.5 7.5M7.5 3.5L3.5 7.5" stroke="#ddd" strokeWidth="1.3" /></svg>
        </Search>
        <Cell $w={1} />
        <Cell $w={161} $pad={5} $ls={-0.15}>No Details<Grow /><Caret /></Cell>
        <Cell $w={31} $pad={6}>
          <svg width="17" height="15" viewBox="0 0 17 15"><circle cx="6.5" cy="6.5" r="3.2" fill="none" stroke="#3a3a3a" strokeWidth="2.4" /><circle cx="6.5" cy="6.5" r="5.2" fill="none" stroke="#3a3a3a" strokeWidth="2" strokeDasharray="2.05 2.03" /><path d="M11 10H16L13.5 13.5Z" fill="#333" /></svg>
        </Cell>
        <Cell $w={7} $line={false} />
      </Bar>

      <HeaderRow>
        <HeadCell>Overview</HeadCell>
        <HeadCell $w={100}>Total</HeadCell>
        <HeadCell $w={100}>Self</HeadCell>
        <HeadCell $w={100}>Calls</HeadCell>
        <HeadCell $w={100}>GC Alloc</HeadCell>
        <HeadCell $w={100}>Time ms<SortMark /></HeadCell>
        <HeadCell $w={100}>Self ms</HeadCell>
        <HeadCell $w={31}>
          <Warning width="18" height="18" viewBox="0 0 18 18"><path d="M9 1.5L16.5 16H1.5Z" fill="#d8d8d8" stroke="#999" strokeWidth="1.8" strokeLinejoin="round" /><path d="M9 6V12" stroke="#fff" strokeWidth="2" /></Warning>
        </HeadCell>
        <HeadCell $w={20} />
      </HeaderRow>

      <TableBody>
        <Rows>
          {tree.map(([depth, kind, name, nums], i) => {
            const [total, self, time, selfMs] = nums.split(" ");
            const on = i === 9;
            return (
              <Row key={i} $on={on}>
                <NameCell $depth={depth}><Arrow $open={kind === "open"} $none={kind === "leaf"} $on={on} />{name}</NameCell>
                <Value>{total}</Value><Value>{self}</Value><Value>1</Value><Value>0 B</Value><Value>{time}</Value><Value>{selfMs}</Value>
              </Row>
            );
          })}
        </Rows>
        <Scroll><ScrollButton /><Thumb /><Grow /><ScrollButton $down /></Scroll>
      </TableBody>

      <TaskBar>
        <Task $w={60}><WindowsLogo /></Task>
        <Task $w={62}><Magnifier /></Task>
        <Task $w={64}><Chrome /></Task>
        <Task $w={61} $orange><Explorer /></Task>
        <Task $w={61}><Outlook /></Task>
        <Task $w={63}><Word /></Task>
        <Task><Steam /></Task>
        <Task><Origin /></Task>
        <Task><Eclipse /></Task>
        <Task><Spring /></Task>
        <Task $line><Git /></Task>
        <Task><Remote /></Task>
        <Task><Globe /></Task>
        <Task><GreenBoard /></Task>
        <Task><Dolphin /></Task>
        <Task><PanelApp /></Task>
        <Task><MySql /></Task>
        <Task><Spider /></Task>
        <Task $w={62} $active><Unity /></Task>
        <Task $line><Discord /></Task>
        <Task $line><Terminal /></Task>
        <Task $line><Unity /></Task>
        <Tray>
          <TrayItem $w={30}><svg width="17" height="10" viewBox="0 0 17 10"><path d="M1 9L8.5 1.5L16 9" fill="none" stroke="#fff" strokeWidth="1.5" /></svg></TrayItem>
          <TrayItem $w={30}><svg width="19" height="15" viewBox="1 1 20 15"><DiscordFace fg="#fff" bg="#222" /></svg></TrayItem>
          <TrayItem $w={30}><svg width="20" height="14" viewBox="0 0 20 14"><rect x="5.5" y="3.5" width="12" height="9" fill="#fff" stroke="#fff" /><path d="M18.5 6V10M1 2V5H5V2M2 0V2M4 0V2M3 5V9H5" stroke="#fff" strokeWidth="1.3" fill="none" /></svg></TrayItem>
          <TrayItem $w={30}><svg width="18" height="16" viewBox="0 0 18 16" fill="none" stroke="#fff" strokeWidth="1.2"><path d="M2 15A14 14 0 0 1 16 1.5" opacity=".7" /><path d="M6 15A10 10 0 0 1 16 5.5" /><path d="M9.5 15A6.5 6.5 0 0 1 16 9" /><circle cx="14.5" cy="13.5" r="1.3" fill="#fff" /></svg></TrayItem>
          <TrayItem $w={30}><svg width="20" height="16" viewBox="0 0 20 16" fill="none" stroke="#fff" strokeWidth="1.2"><path d="M1 5.5H4L8 2V14L4 10.5H1Z" /><path d="M10.5 6A3 3 0 0 1 10.5 10M13 4A6 6 0 0 1 13 12" /><path d="M15.5 2A9 9 0 0 1 15.5 14" opacity=".45" /></svg></TrayItem>
          <Clock>1:38 AM<br />3/29/2020</Clock>
          <Notice><svg width="22" height="21" viewBox="0 0 22 21"><path d="M1 1H21V16H14L11 19.5L8 16H1Z" fill="none" stroke="#fff" strokeWidth="1.5" /></svg></Notice>
          <Peek />
        </Tray>
      </TaskBar>
    </Screen>
  );
}
